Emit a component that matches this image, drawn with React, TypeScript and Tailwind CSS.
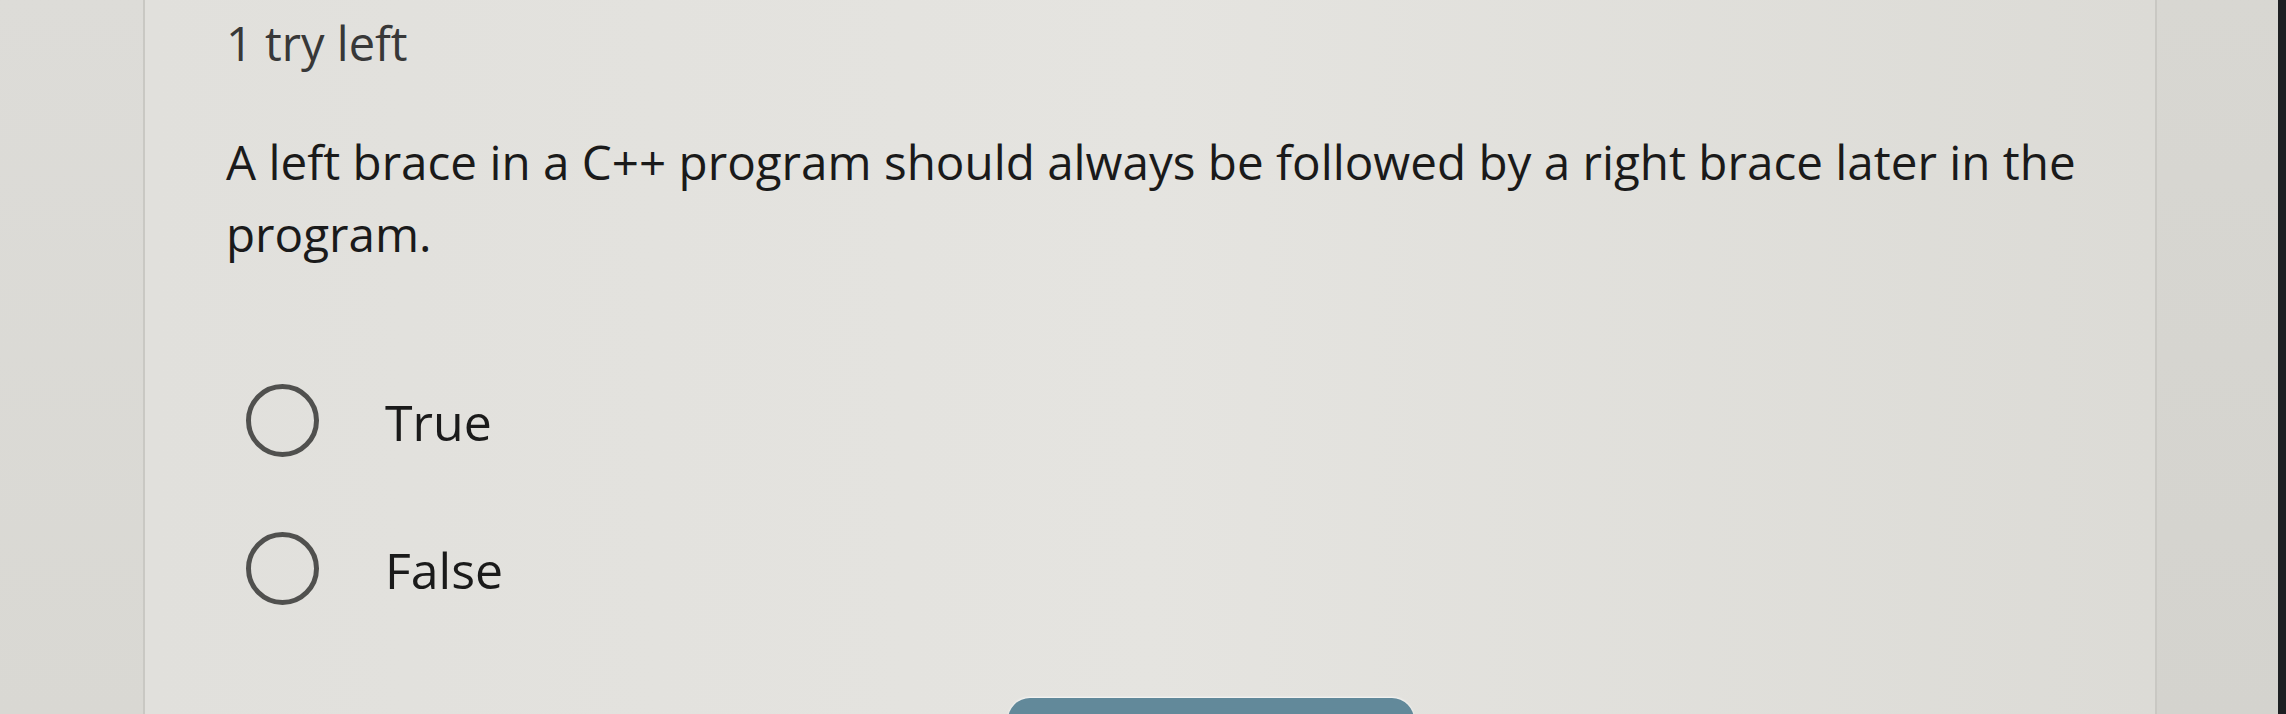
import React from "react";

interface Choice {
  label: string;
}

const choices: Choice[] = [{ label: "True" }, { label: "False" }];

const RadioRow: React.FC<{ label: string; first?: boolean }> = ({ label, first }) => {
  return (
    <label className={`flex items-center h-[73px] ${first ? "mt-[114px]" : "mt-[75px]"}`}>
      <span className="ml-[20px] w-[73px] h-[73px] shrink-0 rounded-full border-[5px] border-[#50504e]" />
      <span className="ml-[66px] pt-[4px] text-[50px] leading-[73px] text-[#1a1a1a]">{label}</span>
    </label>
  );
};

const App: React.FC = () => {
  return (
    <div
      className="flex w-[2286px] h-[714px] overflow-hidden bg-[#dedcd8]"
      style={{ fontFamily: '"Open Sans", "Liberation Sans", sans-serif' }}
    >
      {/* left strip */}
      <div className="w-[143px] shrink-0 bg-linear-to-b from-[#dddcd8] to-[#d9d8d3]" />

      {/* question panel */}
      <div className="flex-1 flex flex-col border-x-2 border-[#c9c8c3] bg-linear-to-r from-[#e1e0dc] via-[#e5e4e0] to-[#dcdbd6] pl-[81px]">
        <div className="pt-[12px] text-[47px] leading-[62px] text-[#383838]">1 try left</div>

        <p className="mt-[52px] mr-[40px] text-[47.6px] leading-[72px] text-[#1a1a1a]">
          A left brace in a C++ program should always be followed by a right brace later in the
          program.
        </p>

        <div className="flex flex-col">
          {choices.map((c, i) => (
            <RadioRow key={c.label} label={c.label} first={i === 0} />
          ))}
        </div>

        <div className="mt-[93px] ml-[782px] w-[406px] h-[60px] shrink-0 rounded-t-[22px] bg-[#62899a] shadow-[0_-1px_2px_rgba(255,255,255,0.7)]" />
      </div>

      {/* right strip */}
      <div className="w-[121px] shrink-0 bg-linear-to-b from-[#d8d7d2] to-[#d4d3ce]" />
      <div className="w-[8px] shrink-0 bg-[#1d1f22]" />
    </div>
  );
};

export default App;
